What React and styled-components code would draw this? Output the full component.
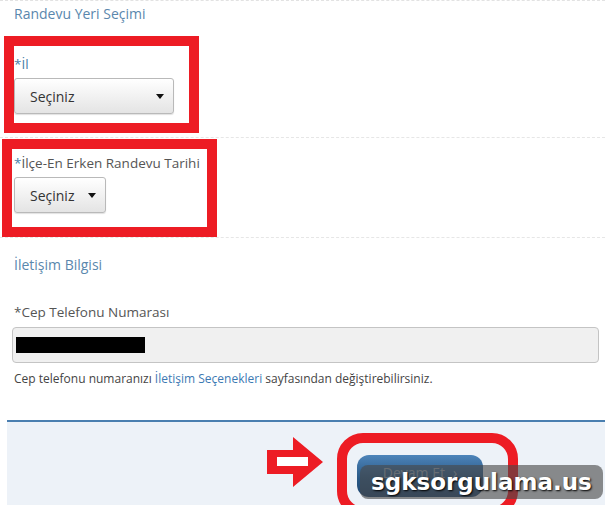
import React from "react";
import styled, { createGlobalStyle } from "styled-components";

const GlobalStyle = createGlobalStyle`
  html, body {
    margin: 0;
    padding: 0;
    background: #ffffff;
    overflow: hidden;
    font-family: "Open Sans", "Noto Sans", sans-serif;
  }
`;

const Page = styled.div`
  position: relative;
  width: 605px;
  height: 505px;
  overflow: hidden;
  border-top: 1px dashed #e2e2e2;
  box-sizing: border-box;
`;

const SectionTitle = styled.div`
  box-sizing: border-box;
  padding: 4px 0 0 14px;
  height: 22px;
  font-size: 14px;
  line-height: 18px;
  color: #5a87ad;
`;

const Highlight = styled.div`
  box-sizing: border-box;
  width: ${({ $w }) => $w}px;
  height: ${({ $h }) => $h}px;
  margin: ${({ $top }) => $top}px 0 0 ${({ $left }) => $left}px;
  border: 10px solid #ed1c24;
  padding: ${({ $padTop }) => $padTop}px 0 0 ${({ $padLeft }) => $padLeft}px;
  background: #ffffff;
`;

const Separator = styled.div`
  height: 0;
  border-top: 1px dashed #e6e6e6;
  margin-top: ${({ $top }) => $top}px;
`;

const Label = styled.div`
  font-size: 13.5px;
  line-height: 16px;
  color: #555555;
  white-space: nowrap;
  margin-bottom: ${({ $gap }) => $gap}px;
`;

const Star = styled.span`
  color: #4a7fa8;
`;

const Select = styled.div`
  box-sizing: border-box;
  display: flex;
  align-items: center;
  justify-content: space-between;
  width: ${({ $w }) => $w}px;
  height: 36px;
  padding: 0 9px 0 15px;
  border: 1px solid #b9b9b9;
  border-radius: 3px;
  background: linear-gradient(#ffffff, #e4e4e4);
  box-shadow: 0 1px 1px rgba(0, 0, 0, 0.12);
  font-size: 14px;
  color: #333333;
`;

const Caret = styled.span`
  width: 0;
  height: 0;
  border-left: 4px solid transparent;
  border-right: 4px solid transparent;
  border-top: 5px solid #111111;
`;

const ContactBlock = styled.div`
  padding: 0 6px 0 14px;
`;

const ContactTitle = styled.div`
  padding-top: 18px;
  font-size: 14px;
  line-height: 18px;
  color: #5a87ad;
`;

const PhoneLabel = styled.div`
  margin-top: 30px;
  font-size: 13.5px;
  line-height: 16px;
  color: #555555;
`;

const Input = styled.div`
  box-sizing: border-box;
  display: flex;
  align-items: center;
  margin: 7px 0 0 -2px;
  height: 36px;
  padding-left: 3px;
  border: 1px solid #c4c4c4;
  border-radius: 4px;
  background: #f0f0f0;
`;

const Redacted = styled.div`
  width: 129px;
  height: 16px;
  background: #000000;
`;

const Help = styled.div`
  margin-top: 9px;
  font-size: 12px;
  line-height: 14px;
  color: #444444;
`;

const Link = styled.span`
  color: #3c79b3;
`;

const Footer = styled.div`
  display: flex;
  align-items: flex-start;
  margin: 34px 0 0 7px;
  height: 85px;
  padding: 11px 0 0 260px;
  box-sizing: border-box;
  border-top: 2px solid #4a7fb0;
  background: #edf2f8;
  overflow: hidden;
`;

const Arrow = styled.svg`
  margin-top: 4px;
  flex: none;
`;

const RedRing = styled.div`
  box-sizing: border-box;
  flex: none;
  width: 181px;
  height: 84px;
  margin-left: 14px;
  padding: 12px 0 0 10px;
  border: 10px solid #ed1c24;
  border-radius: 26px;
`;

const Button = styled.div`
  display: flex;
  align-items: flex-start;
  justify-content: center;
  gap: 8px;
  width: 126px;
  height: 42px;
  padding-top: 8px;
  box-sizing: border-box;
  border-radius: 12px;
  background: linear-gradient(#4d84ba, #2a5986 55%, #1f4670);
  color: #98a9ba;
  font-size: 14px;
`;

const Watermark = styled.div`
  position: absolute;
  left: 360px;
  top: 464px;
  width: 243px;
  height: 34px;
  border-radius: 8px;
  background: rgba(72, 72, 72, 0.62);
  display: flex;
  align-items: center;
  padding-left: 11px;
  box-sizing: border-box;
  font-family: "DejaVu Sans", Verdana, sans-serif;
  font-weight: bold;
  font-size: 23px;
  color: #ffffff;
  text-shadow: 1px 1px 2px #000000;
`;

const App = () => {
  return (
    <>
      <GlobalStyle />
      <Page>
        <SectionTitle>Randevu Yeri Seçimi</SectionTitle>

        <Highlight $w={195} $h={97} $top={13} $left={4} $padTop={10} $padLeft={0}>
          <Label $gap={6}>
            <Star>*İl</Star>
          </Label>
          <Select $w={160}>
            Seçiniz
            <Caret />
          </Select>
        </Highlight>
        <Separator $top={4} />

        <Highlight $w={215} $h={98} $top={1} $left={2} $padTop={6} $padLeft={2}>
          <Label $gap={6}>
            <Star>*</Star>İlçe-En Erken Randevu Tarihi
          </Label>
          <Select $w={92}>
            Seçiniz
            <Caret />
          </Select>
        </Highlight>
        <Separator $top={0} />

        <ContactBlock>
          <ContactTitle>İletişim Bilgisi</ContactTitle>
          <PhoneLabel>*Cep Telefonu Numarası</PhoneLabel>
          <Input>
            <Redacted />
          </Input>
          <Help>
            Cep telefonu numaranızı <Link>İletişim Seçenekleri</Link> sayfasından
            değiştirebilirsiniz.
          </Help>
        </ContactBlock>

        <Footer>
          <Arrow width="56" height="50" viewBox="0 0 56 50">
            <polygon
              points="0,13 26,13 26,0 56,25 26,50 26,37 0,37"
              fill="#ed1c24"
            />
            <rect x="10" y="20" width="31" height="9" fill="#ffffff" />
          </Arrow>
          <RedRing>
            <Button>
              Devam Et <span>›</span>
            </Button>
          </RedRing>
        </Footer>

        <Watermark>sgksorgulama.us</Watermark>
      </Page>
    </>
  );
};

export default App;
